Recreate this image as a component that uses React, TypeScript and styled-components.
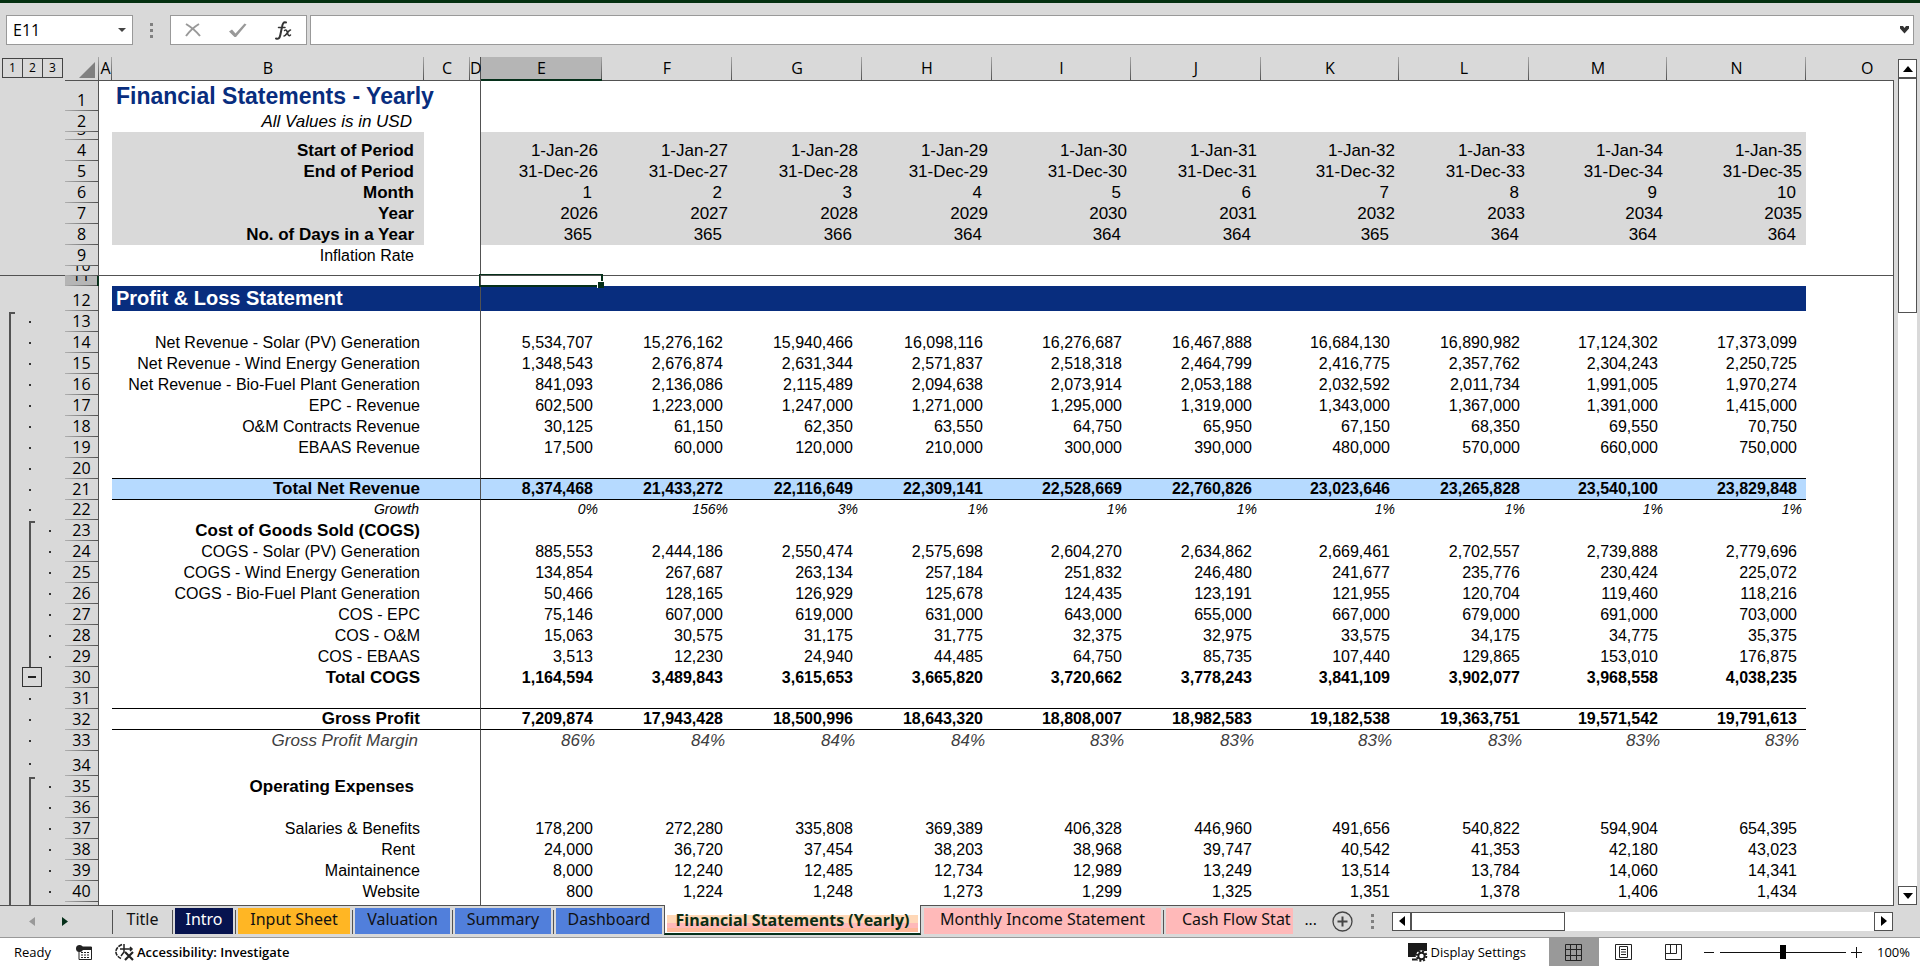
import React from "react";
import styled, { createGlobalStyle, css } from "styled-components";

const LINE = "#525252";
const CHROME = "#d9d9d9";
const GREEN = "#06301a";

const GlobalStyle = createGlobalStyle`
  * { box-sizing: border-box; }
  html, body { margin: 0; padding: 0; }
  body {
    background: ${CHROME};
    color: #000;
    font-family: "Open Sans", "Noto Sans", sans-serif;
    font-size: 16px;
  }
  button, input {
    font: inherit;
    color: inherit;
    margin: 0;
    padding: 0;
    border: 0;
    border-radius: 0;
    background: none;
  }
`;

/* ---------- frame ---------- */

const Window = styled.div`
  display: flex;
  flex-direction: column;
  height: 100vh;
  min-height: 400px;
  overflow: hidden;
  border-top: 3px solid #043010;
`;

const FormulaBar = styled.div`
  display: flex;
  flex: none;
  align-items: center;
  padding: 12px 6px 12px 6px;
`;

const boxed = css`
  height: 30px;
  background: #fff;
  border: 1px solid #999;
`;

const NameBox = styled.label`
  ${boxed}
  display: flex;
  align-items: center;
  width: 127px;
  padding: 0 6px;
`;

const NameInput = styled.input`
  flex: 1;
  min-width: 0;
  outline: none;
`;

const Dots = styled.span`
  display: grid;
  gap: 3px;
  margin: 0 17px;
  i {
    width: 3px;
    height: 3px;
    background: #808080;
  }
`;

const FormulaTools = styled.div`
  ${boxed}
  display: flex;
  align-items: center;
  justify-content: space-between;
  width: 137px;
  margin-right: 3px;
  padding: 0 14px;
`;

const IconButton = styled.button`
  display: flex;
  align-items: center;
  justify-content: center;
`;

const FormulaField = styled.div`
  ${boxed}
  display: flex;
  flex: 1;
  align-items: center;
  padding: 0 4px;
  input {
    flex: 1;
    min-width: 0;
    outline: none;
  }
`;

/* ---------- sheet ---------- */

const SheetArea = styled.main`
  display: flex;
  flex: 1;
  min-height: 0;
`;

const Sheet = styled.div`
  display: flex;
  flex: 1;
  align-items: flex-start;
  min-width: 0;
  overflow: hidden;
  border-bottom: 1px solid ${LINE};
`;

const Gutter = styled.div`
  flex: none;
  width: 65px;
`;

const Levels = styled.div`
  display: flex;
  height: 24px;
  padding: 1px 0 3px 2px;
`;

const LevelButton = styled.button`
  width: 21px;
  margin-right: -1px;
  border: 1px solid #444;
  font-size: 12px;
  line-height: 18px;
`;

const OutlineRow = styled.div<{ $h: number; $frozen?: boolean }>`
  display: flex;
  height: ${(p) => p.$h}px;
  padding-left: 9px;
  border-bottom: ${(p) => (p.$frozen ? `1px solid ${LINE}` : "0")};
`;

type Mark = "line" | "start" | "dot" | "box" | "";

const OutlineMark = styled.span<{ $kind: Mark }>`
  display: flex;
  align-items: center;
  width: 20px;
  flex: none;
  ${(p) =>
    (p.$kind === "line" || p.$kind === "start") &&
    css`
      border-left: 2px solid ${LINE};
    `}
  ${(p) =>
    p.$kind === "start" &&
    css`
      margin-top: 1px;
      background: linear-gradient(${LINE}, ${LINE}) 0 0 / 4px 2px no-repeat;
    `}
  ${(p) =>
    p.$kind === "dot" &&
    css`
      &::before {
        content: "";
        width: 2px;
        height: 2px;
        background: #333;
      }
    `}
`;

const CollapseButton = styled.button`
  flex: none;
  width: 20px;
  height: 20px;
  margin-left: -7px;
  border: 1px solid #333;
  display: flex;
  align-items: center;
  justify-content: center;
  &::before {
    content: "";
    width: 8px;
    height: 2px;
    background: #222;
  }
`;

const Grid = styled.table`
  flex: 1;
  width: 100%;
  min-width: 0;
  table-layout: fixed;
  border-collapse: separate;
  border-spacing: 0;
  background: #fff;
  th, td {
    padding: 0;
    white-space: nowrap;
  }
`;

const ColumnHead = styled.th<{ $active?: boolean; $last?: boolean; $frozen?: boolean }>`
  height: 24px;
  font-weight: 400;
  line-height: 23px;
  text-align: ${(p) => (p.$last ? "left" : "center")};
  text-indent: ${(p) => (p.$last ? "55px" : "0")};
  overflow: hidden;
  border-bottom: 1px solid ${LINE};
  background: linear-gradient(${(p) => (p.$frozen ? LINE : "#a8a8a8")}, ${LINE}) right / ${(p) => (p.$last ? 0 : 1)}px
      100% no-repeat ${CHROME};
  ${(p) =>
    p.$active &&
    css`
      background-color: #b5b5b5;
      border-bottom: 2px solid ${GREEN};
      line-height: 22px;
    `}
`;

const Corner = styled.th`
  height: 24px;
  background: linear-gradient(#a8a8a8, ${LINE}) right / 1px 100% no-repeat ${CHROME};
  border-bottom: 1px solid ${LINE};
  button {
    display: block;
    width: 0;
    height: 0;
    margin: 3px 4px 0 auto;
    border-left: 16px solid transparent;
    border-bottom: 16px solid #808080;
  }
`;

const RowHead = styled.th<{ $active?: boolean; $frozen?: boolean }>`
  font-weight: 400;
  vertical-align: bottom;
  background: linear-gradient(90deg, #b0b0b0, ${LINE}) bottom / 100% 1px no-repeat
    ${(p) => (p.$active ? "#b5b5b5" : CHROME)};
  border-right: ${(p) => (p.$active ? `2px solid ${GREEN}` : `1px solid ${LINE}`)};
`;

const RowNumber = styled.span<{ $h: number }>`
  display: flex;
  align-items: flex-end;
  justify-content: center;
  height: ${(p) => p.$h}px;
  overflow: hidden;
  line-height: 22px;
`;

type Look = "plain" | "bold" | "strong" | "head" | "italic" | "small" | "muted" | "title" | "banner";

const looks: Record<Look, ReturnType<typeof css>> = {
  plain: css``,
  bold: css`
    font-weight: 700;
    font-size: 17px;
  `,
  strong: css`
    font-weight: 700;
  `,
  head: css`
    font-size: 17px;
  `,
  italic: css`
    font-style: italic;
    font-size: 17px;
  `,
  small: css`
    font-style: italic;
    font-size: 14px;
  `,
  muted: css`
    font-style: italic;
    font-size: 17px;
    color: #404040;
  `,
  title: css`
    font-weight: 700;
    font-size: 23px;
    line-height: 28px;
    color: #082d7e;
  `,
  banner: css`
    font-weight: 700;
    font-size: 20px;
    line-height: 23px;
    color: #fff;
  `,
};

const Cell = styled.td<{
  $look?: Look;
  $end?: number;
  $left?: boolean;
  $fill?: string;
  $rule?: string;
  $edge?: boolean;
}>`
  position: relative;
  vertical-align: bottom;
  font-family: "Liberation Sans", Arial, sans-serif;
  font-size: 16px;
  line-height: 19px;
  text-align: ${(p) => (p.$left ? "left" : "right")};
  background: ${(p) => p.$fill ?? "transparent"};
  border-bottom: ${(p) => (p.$rule ? `1px solid ${p.$rule}` : "0")};
  border-right: ${(p) => (p.$edge ? `1px solid ${LINE}` : "0")};
  ${(p) => looks[p.$look ?? "plain"]}
  && {
    padding-right: ${(p) => p.$end ?? 0}px;
    padding-bottom: 1px;
    padding-left: ${(p) => (p.$left ? 4 : 0)}px;
  }
`;

const Selection = styled.span`
  position: absolute;
  z-index: 2;
  inset: -2px -1px -1px -2px;
  border: solid ${GREEN};
  border-width: 1px 2px 2px 1px;
  &::after {
    content: "";
    position: absolute;
    right: -3px;
    bottom: -3px;
    width: 6px;
    height: 6px;
    background: ${GREEN};
    border: solid #fff;
    border-width: 1px 0 0 1px;
  }
`;

/* ---------- scroll bars ---------- */

const VScroll = styled.div`
  display: flex;
  flex: none;
  flex-direction: column;
  width: 19px;
  margin: 2px 3px 1px 4px;
  background: #fff;
`;

const HScroll = styled.div`
  display: flex;
  flex: none;
  width: 501px;
  height: 19px;
  background: #fff;
`;

const ScrollButton = styled.button`
  flex: none;
  display: flex;
  align-items: center;
  justify-content: center;
  width: 19px;
  height: 19px;
  background: #fff;
  border: 1px solid ${LINE};
`;

const Thumb = styled.div<{ $vertical?: boolean }>`
  flex: none;
  width: ${(p) => (p.$vertical ? "19px" : "154px")};
  height: ${(p) => (p.$vertical ? "235px" : "19px")};
  border: 1px solid ${LINE};
`;

const Track = styled.div`
  flex: 1;
`;

/* ---------- tabs ---------- */

const TabStrip = styled.nav`
  display: flex;
  flex: none;
  align-items: flex-start;
  height: 32px;
  padding-right: 27px;
  border-bottom: 1px solid #999;
`;

const TabArrows = styled.div`
  display: flex;
  flex: none;
  align-items: center;
  width: 112px;
  height: 30px;
  padding-left: 29px;
  gap: 27px;
`;

const tabBase = css<{ $w: number }>`
  flex: 0 1 ${(p) => p.$w}px;
  min-width: 0;
`;

const TabSlot = styled.div<{ $w: number; $plain?: boolean }>`
  ${tabBase}
  display: flex;
  padding: 2px 2px 0 2px;
  border-left: 1px solid transparent;
  background: linear-gradient(${LINE}, ${LINE}) 0 4px / ${(p) => (p.$plain ? 0 : 1)}px 24px no-repeat border-box;
`;

const Tab = styled.button<{ $fill?: string; $ink?: string; $clip?: boolean }>`
  flex: 1;
  min-width: 0;
  height: 26px;
  padding-bottom: 3px;
  padding-left: ${(p) => (p.$clip ? "16px" : "0")};
  font-family: "Noto Sans", "Open Sans", sans-serif;
  line-height: 23px;
  text-align: ${(p) => (p.$clip ? "left" : "center")};
  white-space: nowrap;
  overflow: hidden;
  background: ${(p) => p.$fill ?? "transparent"};
  color: ${(p) => p.$ink ?? "#111"};
`;

const ActiveTab = styled.button<{ $w: number }>`
  ${tabBase}
  position: relative;
  height: 30px;
  margin-top: -1px;
  padding: 10px 2px 1px;
  border: 1px solid ${LINE};
  border-width: 0 1px 2px;
  border-bottom-color: ${GREEN};
  background: #fff;
  color: #0b2d14;
  font-weight: 700;
  span {
    display: flex;
    align-items: center;
    justify-content: center;
    height: 17px;
    padding-bottom: 7px;
    white-space: nowrap;
    background: linear-gradient(#ffd8b8 0 8px, #ffb9b9 8px 13px, #ffb899 13px);
  }
`;

const StripTools = styled.div`
  display: flex;
  flex: 1;
  align-items: center;
  height: 30px;
  justify-content: flex-end;
  gap: 1px;
`;

const More = styled.button`
  padding: 0 8px 4px;
  margin-right: 6px;
`;

/* ---------- status bar ---------- */

const StatusBar = styled.footer`
  display: flex;
  flex: none;
  align-items: center;
  height: 28px;
  padding: 0 10px 0 14px;
  background: #fff;
  font-size: 13px;
`;

const StatusButton = styled.button<{ $bold?: boolean }>`
  display: flex;
  align-items: center;
  gap: 2px;
  font-weight: ${(p) => (p.$bold ? 600 : 400)};
  white-space: nowrap;
`;

const Spacer = styled.span<{ $w?: number }>`
  flex: ${(p) => (p.$w ? `none` : 1)};
  width: ${(p) => p.$w ?? 0}px;
`;

const ViewButton = styled.button<{ $on?: boolean }>`
  display: flex;
  align-items: center;
  justify-content: center;
  width: 50px;
  height: 28px;
  background: ${(p) => (p.$on ? "#999" : "transparent")};
`;

const ZoomRange = styled.input`
  appearance: none;
  width: 126px;
  height: 16px;
  margin: 0 5px;
  background: linear-gradient(#111, #111) center / 100% 1px no-repeat;
  &::-webkit-slider-thumb {
    appearance: none;
    width: 6px;
    height: 14px;
    background: #000;
  }
`;

/* ---------- data ---------- */

type Row = {
  h?: number;
  label?: string;
  look?: Look;
  labelEnd?: number;
  valueLook?: Look;
  end?: number;
  values?: string;
  fill?: string;
  rule?: boolean;
  outline?: [Mark, Mark, Mark];
};

const GRAY = "#d9d9d9";
const L1: [Mark, Mark, Mark] = ["line", "dot", ""];
const L2: [Mark, Mark, Mark] = ["line", "line", "dot"];
const S2: [Mark, Mark, Mark] = ["line", "start", "dot"];

const rows: Row[] = [
  { h: 30, label: "Financial Statements - Yearly", look: "title" },
  { label: "All Values is in USD", look: "italic", labelEnd: 12 },
  { h: 8, fill: GRAY },
  { label: "Start of Period", look: "bold", valueLook: "head", labelEnd: 10, end: 4, fill: GRAY, values: "1-Jan-26 1-Jan-27 1-Jan-28 1-Jan-29 1-Jan-30 1-Jan-31 1-Jan-32 1-Jan-33 1-Jan-34 1-Jan-35" },
  { label: "End of Period", look: "bold", valueLook: "head", labelEnd: 10, end: 4, fill: GRAY, values: "31-Dec-26 31-Dec-27 31-Dec-28 31-Dec-29 31-Dec-30 31-Dec-31 31-Dec-32 31-Dec-33 31-Dec-34 31-Dec-35" },
  { label: "Month", look: "bold", valueLook: "head", labelEnd: 10, end: 10, fill: GRAY, values: "1 2 3 4 5 6 7 8 9 10" },
  { label: "Year", look: "bold", valueLook: "head", labelEnd: 10, end: 4, fill: GRAY, values: "2026 2027 2028 2029 2030 2031 2032 2033 2034 2035" },
  { label: "No. of Days in a Year", look: "bold", valueLook: "head", labelEnd: 10, end: 10, fill: GRAY, values: "365 365 366 364 364 364 365 364 364 364" },
  { label: "Inflation Rate", labelEnd: 10 },
  { h: 10 },
  { h: 10 },
  { h: 25, label: "Profit & Loss Statement", look: "banner", fill: "#082d7e" },
  { outline: ["start", "dot", ""] },
  { label: "Net Revenue - Solar (PV) Generation", outline: L1, values: "5,534,707 15,276,162 15,940,466 16,098,116 16,276,687 16,467,888 16,684,130 16,890,982 17,124,302 17,373,099" },
  { label: "Net Revenue - Wind Energy Generation", outline: L1, values: "1,348,543 2,676,874 2,631,344 2,571,837 2,518,318 2,464,799 2,416,775 2,357,762 2,304,243 2,250,725" },
  { label: "Net Revenue - Bio-Fuel Plant Generation", outline: L1, values: "841,093 2,136,086 2,115,489 2,094,638 2,073,914 2,053,188 2,032,592 2,011,734 1,991,005 1,970,274" },
  { label: "EPC - Revenue", outline: L1, values: "602,500 1,223,000 1,247,000 1,271,000 1,295,000 1,319,000 1,343,000 1,367,000 1,391,000 1,415,000" },
  { label: "O&M Contracts Revenue", outline: L1, values: "30,125 61,150 62,350 63,550 64,750 65,950 67,150 68,350 69,550 70,750" },
  { label: "EBAAS Revenue", outline: L1, values: "17,500 60,000 120,000 210,000 300,000 390,000 480,000 570,000 660,000 750,000" },
  { outline: L1, rule: true },
  { label: "Total Net Revenue", look: "bold", valueLook: "strong", fill: "#b6daff", rule: true, outline: L1, values: "8,374,468 21,433,272 22,116,649 22,309,141 22,528,669 22,760,826 23,023,646 23,265,828 23,540,100 23,829,848" },
  { h: 20, label: "Growth", look: "small", valueLook: "small", labelEnd: 5, end: 4, outline: L1, values: "0% 156% 3% 1% 1% 1% 1% 1% 1% 1%" },
  { label: "Cost of Goods Sold (COGS)", look: "bold", outline: S2 },
  { label: "COGS - Solar (PV) Generation", outline: L2, values: "885,553 2,444,186 2,550,474 2,575,698 2,604,270 2,634,862 2,669,461 2,702,557 2,739,888 2,779,696" },
  { label: "COGS - Wind Energy Generation", outline: L2, values: "134,854 267,687 263,134 257,184 251,832 246,480 241,677 235,776 230,424 225,072" },
  { label: "COGS - Bio-Fuel Plant Generation", outline: L2, values: "50,466 128,165 126,929 125,678 124,435 123,191 121,955 120,704 119,460 118,216" },
  { label: "COS - EPC", outline: L2, values: "75,146 607,000 619,000 631,000 643,000 655,000 667,000 679,000 691,000 703,000" },
  { label: "COS - O&M", outline: L2, values: "15,063 30,575 31,175 31,775 32,375 32,975 33,575 34,175 34,775 35,375" },
  { label: "COS - EBAAS", outline: L2, values: "3,513 12,230 24,940 44,485 64,750 85,735 107,440 129,865 153,010 176,875" },
  { label: "Total COGS", look: "bold", valueLook: "strong", outline: ["line", "box", ""], values: "1,164,594 3,489,843 3,615,653 3,665,820 3,720,662 3,778,243 3,841,109 3,902,077 3,968,558 4,038,235" },
  { outline: L1, rule: true },
  { label: "Gross Profit", look: "bold", valueLook: "strong", rule: true, outline: L1, values: "7,209,874 17,943,428 18,500,996 18,643,320 18,808,007 18,982,583 19,182,538 19,363,751 19,571,542 19,791,613" },
  { label: "Gross Profit Margin", look: "muted", valueLook: "muted", labelEnd: 6, end: 7, outline: L1, values: "86% 84% 84% 84% 83% 83% 83% 83% 83% 83%" },
  { h: 25, outline: L1 },
  { label: "Operating Expenses", look: "bold", labelEnd: 10, outline: S2 },
  { outline: L2 },
  { label: "Salaries & Benefits", outline: L2, values: "178,200 272,280 335,808 369,389 406,328 446,960 491,656 540,822 594,904 654,395" },
  { label: "Rent", labelEnd: 9, outline: L2, values: "24,000 36,720 37,454 38,203 38,968 39,747 40,542 41,353 42,180 43,023" },
  { label: "Maintainence", outline: L2, values: "8,000 12,240 12,485 12,734 12,989 13,249 13,514 13,784 14,060 14,341" },
  { label: "Website", outline: L2, values: "800 1,224 1,248 1,273 1,299 1,325 1,351 1,378 1,406 1,434" },
  { outline: L2 },
];

const columns: [string, number | undefined][] = [
  ["A", 13],
  ["B", 312],
  ["C", 46],
  ["D", 11],
  ["E", 121],
  ["F", 130],
  ["G", 130],
  ["H", 130],
  ["I", 139],
  ["J", 130],
  ["K", 138],
  ["L", 130],
  ["M", 138],
  ["N", 139],
  ["O", undefined],
];

const FROZEN_ROW = 10;
const SELECTED_ROW = 11;

const Arrow = ({ dir, color = "#000", w = 6, h = 10 }: { dir: "l" | "r" | "u" | "d"; color?: string; w?: number; h?: number }) => {
  const points = {
    l: `${w},0 ${w},${h} 0,${h / 2}`,
    r: `0,0 ${w},${h / 2} 0,${h}`,
    u: `0,${h} ${w},${h} ${w / 2},0`,
    d: `0,0 ${w},0 ${w / 2},${h}`,
  }[dir];
  return (
    <svg width={w} height={h} viewBox={`0 0 ${w} ${h}`} aria-hidden="true">
      <polygon points={points} fill={color} />
    </svg>
  );
};

const Grip = () => (
  <Dots aria-hidden="true">
    <i />
    <i />
    <i />
  </Dots>
);

function SheetRow({ row, n }: { row: Row; n: number }) {
  const values = row.values?.split(" ") ?? [];
  const frozen = n === FROZEN_ROW;
  const rule = frozen ? LINE : row.rule ? "#000" : undefined;
  const edge = frozen ? LINE : undefined;
  const band = row.fill !== GRAY ? row.fill : undefined;
  const left = row.look === "title" || row.look === "banner";
  return (
    <tr>
      <RowHead scope="row" $active={n === SELECTED_ROW}>
        <RowNumber $h={row.h ?? 21}>{n}</RowNumber>
      </RowHead>
      <Cell $rule={edge} />
      <Cell $look={row.look} $left={left} $end={left ? 0 : row.labelEnd ?? 4} $fill={row.fill} $rule={rule}>
        {row.label}
      </Cell>
      <Cell $fill={band} $rule={rule} />
      <Cell $fill={band} $rule={rule} $edge />
      {columns.slice(4, 14).map(([name], i) => (
        <Cell key={name} $look={row.valueLook} $end={row.end ?? 9} $fill={row.fill} $rule={rule}>
          {values[i]}
          {n === SELECTED_ROW && i === 0 && <Selection />}
        </Cell>
      ))}
      <Cell $rule={edge} $edge />
    </tr>
  );
}

function Outline() {
  return (
    <Gutter>
      <Levels>
        <LevelButton>1</LevelButton>
        <LevelButton>2</LevelButton>
        <LevelButton>3</LevelButton>
      </Levels>
      {rows.map((row, i) => (
        <OutlineRow key={i} $h={row.h ?? 21} $frozen={i + 1 === FROZEN_ROW}>
          {row.outline?.map((kind, k) =>
            kind === "box" ? <CollapseButton key={k} aria-label="Collapse group" /> : <OutlineMark key={k} $kind={kind} />
          )}
        </OutlineRow>
      ))}
    </Gutter>
  );
}

const tabs = [
  { name: "Title", w: 60 },
  { name: "Intro", w: 63, fill: "#06134f", ink: "#fff" },
  { name: "Input Sheet", w: 117, fill: "#ffb624" },
  { name: "Valuation", w: 100, fill: "#517fdb" },
  { name: "Summary", w: 101, fill: "#517fdb" },
  { name: "Dashboard", w: 111, fill: "#517fdb" },
];

export default function App() {
  return (
    <Window>
      <GlobalStyle />
      <FormulaBar>
        <NameBox>
          <NameInput aria-label="Name box" defaultValue="E11" />
          <Arrow dir="d" color="#444" w={8} h={4} />
        </NameBox>
        <Grip />
        <FormulaTools>
          <IconButton aria-label="Cancel">
            <svg width="16" height="14" viewBox="0 0 16 14" fill="none" stroke="#999" strokeWidth="2">
              <path d="M1 1C6 4 11 8 15 13M14 1C9 4 4 9 1 13" />
            </svg>
          </IconButton>
          <IconButton aria-label="Enter">
            <svg width="18" height="14" viewBox="0 0 18 14">
              <path d="M0 8.500L3 6.500 6.500 10.500 15.500.500 17.500 1.500 7 14H5.500Z" fill="#999" />
            </svg>
          </IconButton>
          <IconButton aria-label="Insert function">
            <svg width="17" height="19" viewBox="0 0 17 19" fill="none" stroke="#333" strokeLinecap="round">
              <path d="M11 1.500C8.500.500 7.500 3 7 6L5.300 14C4.700 17 3.500 18.500 1 17.500" strokeWidth="2" />
              <path d="M3.500 6.500H10" strokeWidth="1.500" />
              <path d="M9.500 9.500C11.500 8 12 10 12.500 12 13 14.500 14 15.500 15.500 14M15.500 9C13.500 9 11 15 9 15" strokeWidth="1.500" />
            </svg>
          </IconButton>
        </FormulaTools>
        <FormulaField>
          <input aria-label="Formula" />
          <IconButton aria-label="Expand formula bar">
            <svg width="9" height="8" viewBox="0 0 9 8">
              <path d="M0 0H3L4.500 2 6 0H9V2.500L4.500 7.500 0 2.500Z" fill="#333" />
            </svg>
          </IconButton>
        </FormulaField>
      </FormulaBar>

      <SheetArea>
        <Sheet>
          <Outline />
          <Grid>
            <colgroup>
              <col width={34} />
              {columns.map(([name, w]) => (
                <col key={name} width={w} />
              ))}
            </colgroup>
            <thead>
              <tr>
                <Corner>
                  <button aria-label="Select all" />
                </Corner>
                {columns.map(([name]) => (
                  <ColumnHead key={name} scope="col" $active={name === "E"} $last={name === "O"} $frozen={name === "D"}>
                    {name}
                  </ColumnHead>
                ))}
              </tr>
            </thead>
            <tbody>
              {rows.map((row, i) => (
                <SheetRow key={i} row={row} n={i + 1} />
              ))}
            </tbody>
          </Grid>
        </Sheet>
        <VScroll>
          <ScrollButton aria-label="Scroll up">
            <Arrow dir="u" w={10} h={6} />
          </ScrollButton>
          <Thumb $vertical />
          <Track />
          <ScrollButton aria-label="Scroll down">
            <Arrow dir="d" w={10} h={6} />
          </ScrollButton>
        </VScroll>
      </SheetArea>

      <TabStrip>
        <TabArrows>
          <IconButton aria-label="Previous sheets">
            <Arrow dir="l" color="#999" w={6} h={9} />
          </IconButton>
          <IconButton aria-label="Next sheets">
            <Arrow dir="r" color={GREEN} w={6} h={9} />
          </IconButton>
        </TabArrows>
        {tabs.map((t) => (
          <TabSlot key={t.name} $w={t.w}>
            <Tab $fill={t.fill} $ink={t.ink}>
              {t.name}
            </Tab>
          </TabSlot>
        ))}
        <ActiveTab $w={257}>
          <span>Financial Statements (Yearly)</span>
        </ActiveTab>
        <TabSlot $w={242} $plain>
          <Tab $fill="#ffb9b9">Monthly Income Statement</Tab>
        </TabSlot>
        <TabSlot $w={132}>
          <Tab $fill="#ffb9b9" $clip>
            Cash Flow Stat
          </Tab>
        </TabSlot>
        <StripTools>
          <More aria-label="More sheets">...</More>
          <IconButton aria-label="New sheet">
            <svg width="21" height="21" viewBox="0 0 21 21" fill="none" stroke="#444">
              <circle cx="10.500" cy="10.500" r="9.500" strokeWidth="1.300" />
              <path d="M10.500 5.500V15.500M5.500 10.500H15.500" strokeWidth="2" />
            </svg>
          </IconButton>
          <Grip />
          <HScroll>
            <ScrollButton aria-label="Scroll left">
              <Arrow dir="l" />
            </ScrollButton>
            <Thumb />
            <Track />
            <ScrollButton aria-label="Scroll right">
              <Arrow dir="r" />
            </ScrollButton>
          </HScroll>
        </StripTools>
      </TabStrip>

      <StatusBar>
        <span>Ready</span>
        <Spacer $w={25} />
        <StatusButton aria-label="Record macro">
          <svg width="16" height="15" viewBox="0 0 16 15">
            <path d="M3 2H15.500V14.500H3Z" fill="#fff" stroke="#222" />
            <path d="M3 2H15.500V5H3Z" fill="#222" />
            <circle cx="3.500" cy="3.500" r="3.500" fill="#222" />
            <path d="M5 7.500H14M5 10H14M5 12.500H14" stroke="#222" strokeDasharray="2 1" />
          </svg>
        </StatusButton>
        <Spacer $w={23} />
        <StatusButton $bold>
          <svg width="20" height="18" viewBox="0 0 20 18" fill="none" stroke="#222">
            <path d="M7 1.500C-1 5-1 12 6 15.500" strokeWidth="1.600" strokeDasharray="4 1" />
            <path d="M9 1V6M5 6H17M9 6V9L6 13M15 4L17 6 15 8" strokeWidth="1.500" />
            <path d="M10 9L18 17M18 9L10 17" strokeWidth="2.200" />
          </svg>
          Accessibility: Investigate
        </StatusButton>
        <Spacer />
        <StatusButton>
          <svg width="20" height="19" viewBox="0 0 20 19">
            <path d="M0 0H19V8H10V14H0Z" fill="#1a1a1a" />
            <path d="M4 16.500H10" stroke="#1a1a1a" strokeWidth="2" />
            <circle cx="13.500" cy="13" r="5.800" fill="#fff" />
            <circle cx="13.500" cy="13" r="3.200" fill="none" stroke="#1a1a1a" strokeWidth="2" />
            <circle cx="13.500" cy="13" r="4.800" fill="none" stroke="#1a1a1a" strokeWidth="2" strokeDasharray="2 1.770" />
          </svg>
          Display Settings
        </StatusButton>
        <Spacer $w={23} />
        <ViewButton $on aria-label="Normal view">
          <svg width="17" height="17" viewBox="0 0 17 17" fill="none" stroke="#222">
            <path d="M.500.500H16.500V16.500H.500ZM5.500.500V16.500M11.500.500V16.500M.500 5.500H16.500M.500 11.500H16.500" />
          </svg>
        </ViewButton>
        <ViewButton aria-label="Page layout view">
          <svg width="17" height="16" viewBox="0 0 17 16" fill="none" stroke="#222">
            <path d="M.500.500H16.500V15.500H.500ZM4.500 2.500H12.500V13.500H4.500ZM6 5.500H11M6 8H11M6 10.500H11" />
          </svg>
        </ViewButton>
        <ViewButton aria-label="Page break view">
          <svg width="17" height="16" viewBox="0 0 17 16" fill="none" stroke="#222">
            <path d="M.500.500H16.500V15.500H.500ZM5.500.500V9.500M11.500.500V9.500M.500 9.500H11.500" />
          </svg>
        </ViewButton>
        <Spacer $w={5} />
        <IconButton aria-label="Zoom out">
          <svg width="11" height="11" viewBox="0 0 11 11" stroke="#111">
            <path d="M0 5.500H10" />
          </svg>
        </IconButton>
        <ZoomRange type="range" aria-label="Zoom" min={0} max={100} defaultValue={50} />
        <IconButton aria-label="Zoom in">
          <svg width="11" height="11" viewBox="0 0 11 11" stroke="#111">
            <path d="M0 5.500H11M5.500 0V11" />
          </svg>
        </IconButton>
        <Spacer $w={15} />
        <StatusButton>100%</StatusButton>
      </StatusBar>
    </Window>
  );
}
